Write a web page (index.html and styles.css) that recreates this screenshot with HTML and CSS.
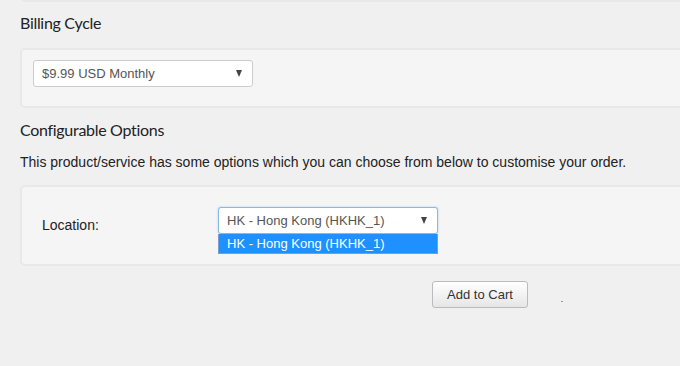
FILE: index.html
```html
<!DOCTYPE html>
<html>
<head>
<title>Configure</title>
<link rel="stylesheet" href="styles.css">
</head>
<body>
<div class="page">
	<div class="well topWell"></div>
	<h3>Billing Cycle</h3>
	<div class="well cycleWell">
		<div class="fakeSelect cycle">
			<span>$9.99 USD Monthly</span>
			<span class="arrow"></span>
		</div>
	</div>
	<h3 class="second">Configurable Options</h3>
	<p class="intro">This product/service has some options which you can choose from below to customise your order.</p>
	<div class="well optionsWell">
		<div class="option">
			<div class="label">Location:</div>
			<div class="selectWrap">
				<div class="fakeSelect focused">
					<span>HK - Hong Kong (HKHK_1)</span>
					<span class="arrow"></span>
				</div>
				<div class="dropList">
					<div class="item selected">HK - Hong Kong (HKHK_1)</div>
				</div>
			</div>
		</div>
	</div>
	<div class="actions">
		<button class="cartBtn">Add to Cart</button>
		<span class="loader"></span>
	</div>
</div>
</body>
</html>
```
FILE: styles.css
```css
html,body{
	padding:0;
	margin:0;
	background-color:#f0f0f0;
	font-family:"Liberation Sans",Arial,sans-serif;
	font-size:13px;
	color:#333;
	overflow:hidden;
}
div.page{
	padding-left:20px;
	width:720px;
}
div.well{
	background-color:#f5f5f5;
	border:2px solid #e8e8e8;
	border-radius:5px;
	box-sizing:border-box;
}
div.topWell{
	height:40px;
	margin-top:-38px;
	border-top-left-radius:0;
}
h3{
	font-family:"Lato","Open Sans",sans-serif;
	font-weight:400;
	font-size:16px;
	letter-spacing:-0.3px;
	color:#222;
	margin:10px 0 0 0;
	line-height:22px;
}
h3.second{
	margin-top:11px;
}
div.cycleWell{
	margin-top:14px;
	height:60px;
	padding:10px 11px;
}
div.fakeSelect{
	width:220px;
	height:27px;
	box-sizing:border-box;
	border:1px solid #ccc;
	border-radius:3px;
	background-color:#fff;
	color:#555;
	display:flex;
	align-items:center;
	justify-content:space-between;
	padding:0 8px 0 8px;
}
div.fakeSelect.focused{
	border-color:#85b7f0;
	box-shadow:0 0 2px rgba(102,175,233,0.6);
}
span.arrow{
	width:0;
	height:0;
	border-left:3.5px solid transparent;
	border-right:3.5px solid transparent;
	border-top:7px solid #444;
	margin-right:2px;
}
p.intro{
	margin:12px 0 0 0;
	font-size:14px;
	line-height:18px;
	color:#222;
}
div.optionsWell{
	margin-top:14px;
	height:81px;
	padding:20px 20px;
}
div.option{
	display:flex;
	align-items:flex-start;
}
div.option>div.label{
	width:176px;
	padding-top:10px;
	font-size:14px;
	color:#222;
}
div.selectWrap{
	position:relative;
}
div.dropList{
	position:absolute;
	top:27px;
	left:0;
	width:220px;
	background-color:#fff;
	border:1px solid #7a9cd3;
	border-top:none;
	box-sizing:border-box;
}
div.dropList>div.item{
	height:19px;
	line-height:19px;
	padding-left:8px;
}
div.dropList>div.item.selected{
	background-color:#1e90ff;
	color:#fff;
}
div.actions{
	display:flex;
	align-items:center;
	margin-top:15px;
	padding-left:412px;
}
button.cartBtn{
	font-family:"Liberation Sans",Arial,sans-serif;
	font-size:13px;
	color:#333;
	width:96px;
	height:27px;
	border:1px solid #bbb;
	border-radius:3px;
	background:linear-gradient(#fff,#e6e6e6);
	padding:0;
}
span.loader{
	display:inline-block;
	width:2px;
	height:1px;
	background-color:#999;
	margin-left:33px;
	margin-top:14px;
}
```
